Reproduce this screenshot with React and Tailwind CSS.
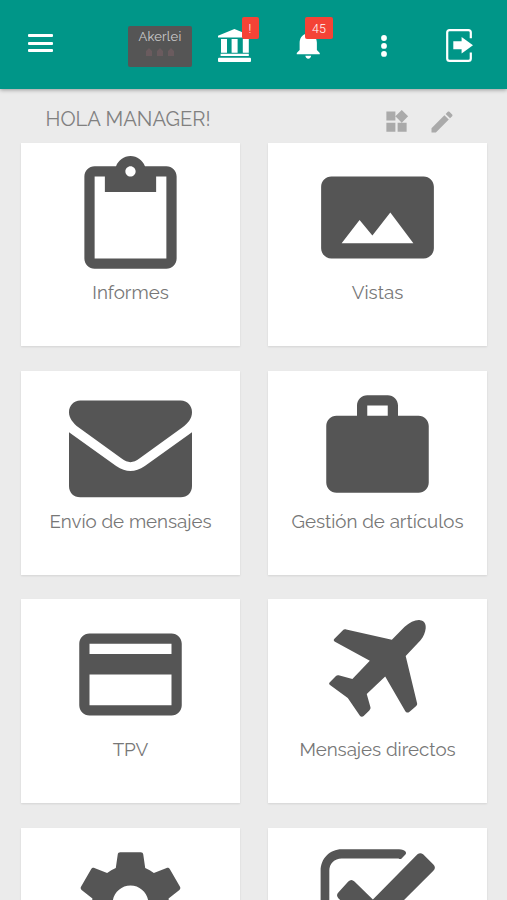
const icons = {
  reports:
    "M19 2h-4.18C14.4.84 13.3 0 12 0c-1.3 0-2.4.84-2.82 2H5c-1.1 0-2 .9-2 2v16c0 1.1.9 2 2 2h14c1.1 0 2-.9 2-2V4c0-1.1-.9-2-2-2zm-7 0c.55 0 1 .45 1 1s-.45 1-1 1-1-.45-1-1 .45-1 1-1zm7 18H5V4h2v3h10V4h2v16z",
  views:
    "M23 18V6c0-1.1-.9-2-2-2H3c-1.1 0-2 .9-2 2v12c0 1.1.9 2 2 2h18c1.1 0 2-.9 2-2zM8.5 12.5l2.5 3.01L14.5 11l4.5 6H5l3.5-4.5z",
  mail:
    "M2.2 3h19.6C23.1 3 24 4 24 5.3c0 1.2-.8 2.2-1.9 3l-8.3 6c-1.4 1-2.2 1-3.6 0l-8.3-6C.8 7.4 0 6.5 0 5.3 0 4 .9 3 2.2 3zM0 9.2l9.2 6.6c2 1.3 3.6 1.3 5.6 0L24 9.2v10.5c0 1.3-.9 2.2-2.2 2.2H2.2C.9 21.9 0 21 0 19.7z",
  items:
    "M20 6h-4V4c0-1.11-.89-2-2-2h-4c-1.11 0-2 .89-2 2v2H4c-1.11 0-2 .89-2 2v11c0 1.11.89 2 2 2h16c1.11 0 2-.89 2-2V8c0-1.11-.89-2-2-2zm-6 0h-4V4h4v2z",
  card:
    "M20 4H4c-1.11 0-2 .89-2 2v12c0 1.11.89 2 2 2h16c1.11 0 2-.89 2-2V6c0-1.11-.89-2-2-2zm0 14H4v-6h16v6zm0-10H4V6h16v2z",
  plane:
    "M14.8 5.2l2.5-2.5c1-.9 2.1-1.4 3-1.3.8.1 1.2.7 1.1 1.6-.1.8-.4 1.6-1 2.3l-2.9 3.1 2.2 9.1c.1.3 0 .5-.2.7l-1.3 1.1c-.3.2-.6.1-.8-.2l-3.9-6.7-3.6 3.4.7 2.5c.1.3 0 .5-.2.7l-1.1 1.1c-.2.2-.5.2-.7 0l-2.4-3.5-3.4-2.5c-.3-.2-.3-.4-.1-.6l1.2-1.2c.2-.2.4-.2.7-.1l2.5.7 3.4-3.6-6.8-3.7c-.3-.2-.3-.4-.1-.6l1.6-1.6c.2-.2.4-.3.7-.2z",
  settings:
    "M19.43 12.98c.04-.32.07-.64.07-.98s-.03-.66-.07-.98l2.11-1.65c.19-.15.24-.42.12-.64l-2-3.46c-.12-.22-.39-.3-.61-.22l-2.49 1c-.52-.4-1.08-.73-1.69-.98l-.38-2.65C14.46 2.18 14.25 2 14 2h-4c-.25 0-.46.18-.49.42l-.38 2.65c-.61.25-1.17.59-1.69.98l-2.49-1c-.23-.09-.49 0-.61.22l-2 3.46c-.13.22-.07.49.12.64l2.11 1.65c-.04.32-.07.65-.07.98s.03.66.07.98l-2.11 1.65c-.19.15-.24.42-.12.64l2 3.46c.12.22.39.3.61.22l2.49-1c.52.4 1.08.73 1.69.98l.38 2.65c.03.24.24.42.49.42h4c.25 0 .46-.18.49-.42l.38-2.65c.61-.25 1.17-.59 1.69-.98l2.49 1c.23.09.49 0 .61-.22l2-3.46c.12-.22.07-.49-.12-.64l-2.11-1.65zM12 15.5c-1.93 0-3.5-1.57-3.5-3.5s1.57-3.5 3.5-3.5 3.5 1.57 3.5 3.5-1.57 3.5-3.5 3.5z",
  check:
    "M16.1 3.2H5c-1.4 0-2.4 1-2.4 2.4v13c0 1.4 1 2.4 2.4 2.4h13c1.4 0 2.4-1 2.4-2.4v-5l1.7-1.7v6.7c0 2.3-1.8 4.1-4.1 4.1H5c-2.3 0-4.1-1.8-4.1-4.1v-13c0-2.4 1.8-4.2 4.1-4.2h11.2c.6 0 1.1.2 1.3.5.1.2.1.4-.1.6l-.7.7c-.2.2-.4.1-.6 0zM20.9 2.4l2 2c.4.4.4.8 0 1.2L11.6 16.9c-.4.4-.9.4-1.3 0l-5.9-5.9c-.4-.4-.4-.8 0-1.2l1.9-2.1c.4-.4.8-.4 1.2 0l3.6 3.5L19.8 2.4c.4-.3.7-.3 1.1 0z",
};

const tiles = [
  { id: "reports", label: "Informes" },
  { id: "views", label: "Vistas" },
  { id: "mail", label: "Envío de mensajes" },
  { id: "items", label: "Gestión de artículos" },
  { id: "card", label: "TPV" },
  { id: "plane", label: "Mensajes directos" },
  { id: "settings" },
  { id: "check" },
];

const Badge = ({ children, className }) => (
  <span
    className={`absolute flex h-[21.5px] items-center justify-center rounded-[2px] bg-[#f44336] pt-[3px] font-[Roboto,sans-serif] text-[12.5px] font-light text-white ${className}`}
  >
    {children}
  </span>
);

const Header = () => (
  <header className="relative flex h-[88.5px] items-start bg-[#009688] pl-7 text-white shadow-[0_1px_4px_rgba(0,0,0,0.35)]">
    <button type="button" className="mt-[34px] flex w-[25px] flex-col gap-[4.5px]">
      <span className="h-[3px] w-full rounded-[1px] bg-white" />
      <span className="h-[3px] w-full rounded-[1px] bg-white" />
      <span className="h-[3px] w-full rounded-[1px] bg-white" />
    </button>

    <div className="mt-[26px] ml-[75px] flex h-[41px] w-[64px] flex-col items-center rounded-[2px] bg-[#555]">
      <span className="mt-[2px] text-[13px] leading-[17px] tracking-[0.2px] text-[#ccc]">Akerlei</span>
      <svg width="30" height="8" viewBox="0 0 30 8" fill="#6a5b5e" className="mt-[3px]">
        <path d="M1 8V3l3-3 3 3v5zM12 8V3l3-3 3 3v5zM23 8V3l3-3 3 3v5z" />
      </svg>
    </div>

    <div className="relative mt-[29px] ml-[26px] h-[33px] w-[33px]">
      <svg width="33" height="33" viewBox="0 0 33 33" fill="currentColor">
        <path d="M16.4 0L33 6.8v1.7H0V6.8zM3 10h6v13.8H3zM13.6 10h6v13.8h-6zM24.8 10h6v13.8h-6zM2.6 24.8h28.2V27H2.6z" />
        <rect y="28.7" width="33" height="4.3" rx="1" />
      </svg>
      <Badge className="-top-3 left-[23.5px] w-[17px]">!</Badge>
    </div>

    <div className="relative mt-[27px] ml-[40px] h-[35px] w-[35px]">
      <svg width="34.5" height="34.5" viewBox="0 0 24 24" fill="currentColor">
        <path d="M12 22c1.1 0 2-.9 2-2h-4c0 1.1.89 2 2 2zm6-6v-5c0-3.07-1.64-5.64-4.5-6.32V4c0-.83-.67-1.5-1.5-1.5s-1.5.67-1.5 1.5v.68C7.63 5.36 6 7.92 6 11v5l-2 2v1h16v-1l-2-2z" />
      </svg>
      <Badge className="-top-2.5 left-[14px] w-[28px]">45</Badge>
    </div>

    <svg width="6" height="22" viewBox="0 0 6 22" fill="currentColor" className="mt-[34.5px] ml-[55px]">
      <circle cx="3" cy="3" r="2.9" />
      <circle cx="3" cy="10.9" r="2.9" />
      <circle cx="3" cy="18.9" r="2.9" />
    </svg>

    <svg width="28" height="33" viewBox="0 0 28 33" fill="none" className="mt-[29px] ml-[59px]">
      <path
        d="M24.8 9.2V3.6c0-1.6-.8-2.4-2.4-2.4H3.6c-1.6 0-2.4.8-2.4 2.4v25.8c0 1.6.8 2.4 2.4 2.4h18.8c1.6 0 2.4-.8 2.4-2.4v-6"
        stroke="currentColor"
        strokeWidth="2.2"
      />
      <path d="M7.3 12.3h8.3V8l11.4 8.3-11.4 8.2v-4.3H7.3z" fill="currentColor" />
    </svg>
  </header>
);

const Tile = ({ id, label }) => (
  <button
    type="button"
    className="flex h-[203.7px] flex-col items-center bg-white pt-[13.7px] shadow-[0_1px_2px_rgba(0,0,0,0.1)]"
  >
    <svg width="123" height="123" viewBox="0 0 24 24" fill="#555" fillRule="evenodd">
      <path d={icons[id]} />
    </svg>
    {label && <span className="text-[18.75px] leading-[26px] text-[#777]">{label}</span>}
  </button>
);

export default function App() {
  return (
    <div className="h-[900px] w-[507px] overflow-hidden bg-[#ebebeb] font-[Raleway,Lato,sans-serif]">
      <Header />

      <div className="flex h-[54px] items-start pl-[45.5px] text-[#aaa]">
        <h1 className="mt-[17.5px] w-[337.5px] text-[20.2px] leading-[26px] text-[#808080]">HOLA MANAGER!</h1>
        <svg width="27" height="27" viewBox="0 0 24 24" fill="currentColor" className="mt-[19.5px]">
          <path d="M13 13v8h8v-8h-8zM3 21h8v-8H3v8zM3 3v8h8V3H3zm13.66-1.31L11 7.34 16.66 13l5.66-5.66-5.66-5.65z" />
        </svg>
        <svg width="28" height="28" viewBox="0 0 24 24" fill="currentColor" className="mt-[19px] ml-[17.5px]">
          <path d="M3 17.25V21h3.75L17.81 9.94l-3.75-3.75L3 17.25zM20.71 7.04c.39-.39.39-1.02 0-1.41l-2.34-2.34c-.39-.39-1.02-.39-1.41 0l-1.83 1.83 3.75 3.75 1.83-1.83z" />
        </svg>
      </div>

      <main className="grid grid-cols-[219px_219px] gap-x-7 gap-y-[24.8px] pl-[21px]">
        {tiles.map((tile) => (
          <Tile key={tile.id} {...tile} />
        ))}
      </main>
    </div>
  );
}
